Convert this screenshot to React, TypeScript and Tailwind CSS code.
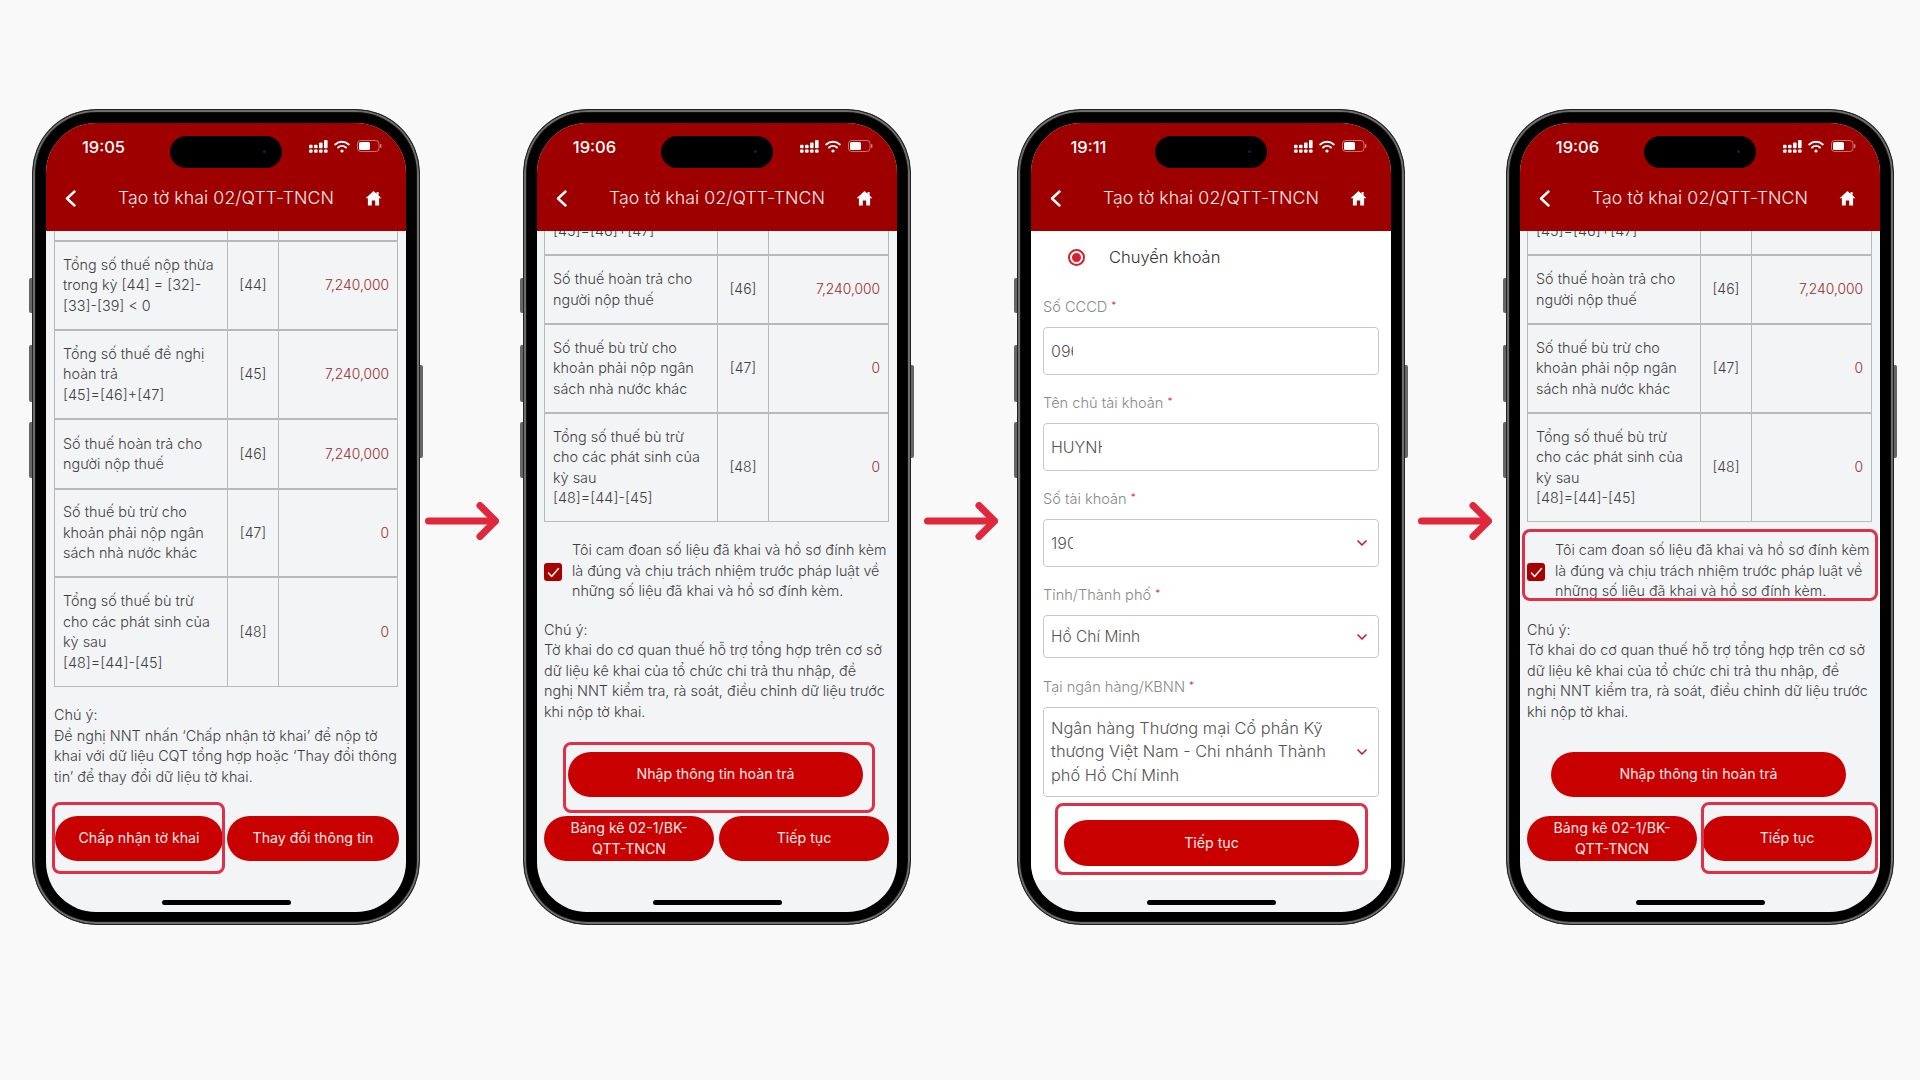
import React from "react";
import { ChevronDown } from "lucide-react";

type RowData = { h: string; label: string[]; code: string; value: string };

const font = { fontFamily: "Inter, 'Noto Sans', sans-serif" };

function StatusIcons() {
  return (
    <div className="flex items-center gap-[6px]">
      <svg width="19" height="13" viewBox="0 0 19 13" fill="white">
        <rect x="0" y="4.8" width="3.6" height="3.4" rx="1" />
        <rect x="0" y="9.4" width="3.6" height="3.4" rx="1" />
        <rect x="5" y="4.8" width="3.6" height="3.4" rx="1" />
        <rect x="5" y="9.4" width="3.6" height="3.4" rx="1" />
        <rect x="10" y="2.4" width="3.6" height="5.8" rx="1" />
        <rect x="10" y="9.4" width="3.6" height="3.4" rx="1" />
        <rect x="15" y="0" width="3.6" height="8.2" rx="1" />
        <rect x="15" y="9.4" width="3.6" height="3.4" rx="1" />
      </svg>
      <svg width="16" height="13" viewBox="0 0 16 13" fill="none" stroke="white" strokeWidth="2" strokeLinecap="round">
        <path d="M1.2 4.4a10.4 10.4 0 0 1 13.6 0" />
        <path d="M4 7.5a6.2 6.2 0 0 1 8 0" />
        <circle cx="8" cy="11" r="1.6" fill="white" stroke="none" />
      </svg>
      <svg width="25" height="12" viewBox="0 0 25 12" className="ml-[1px]">
        <rect x="0.5" y="0.5" width="21.5" height="11" rx="3.2" fill="none" stroke="white" strokeOpacity="0.45" />
        <rect x="2" y="2" width="11" height="8" rx="1.6" fill="white" />
        <rect x="23" y="4" width="1.4" height="4" rx="0.7" fill="white" fillOpacity="0.5" />
      </svg>
    </div>
  );
}

function Header({ time }: { time: string }) {
  return (
    <div className="h-[108px] bg-[#9e0000] shrink-0 text-white flex flex-col">
      <div className="h-[46px] flex items-center justify-between pr-[24px]">
        <div className="w-[115px] text-center text-[16.5px] font-medium pt-[2px]">{time}</div>
        <StatusIcons />
      </div>
      <div className="h-[58px] flex items-center pl-[19px] pr-[24px]">
        <svg width="11" height="17" viewBox="0 0 11 17" fill="none" stroke="white" strokeWidth="2.4" strokeLinecap="round" strokeLinejoin="round">
          <path d="M9.5 1.5 2 8.5l7.5 7" />
        </svg>
        <div className="flex-1 pl-[11px] text-center text-[17.7px] font-light text-[#fbeaea] tracking-[0.1px] whitespace-nowrap">Tạo tờ khai 02/QTT-TNCN</div>
        <svg width="17" height="16" viewBox="0 0 17 16" fill="white">
          <path d="M8.5 1 .6 8.2h2.3V15.5h3.9V10.6h3.4v4.9h3.9V8.2h2.3l-2.8-2.6V2h-2v1.8z" />
        </svg>
      </div>
    </div>
  );
}

function Highlight({ className }: { className: string }) {
  return <div className={`absolute border-[3px] border-[#dc3149] rounded-[8px] pointer-events-none ${className}`} />;
}

function Btn({ className, children }: { className: string; children: React.ReactNode }) {
  return (
    <div className={`bg-[#c80000] text-[#fde8e8] rounded-full flex items-center justify-center text-center text-[14.2px] leading-[20.5px] ${className}`}>
      {children}
    </div>
  );
}

function Phone({ time, children }: { time: string; children: React.ReactNode }) {
  return (
    <div className="relative w-[388px] h-[816px] shrink-0 bg-black rounded-[64px] p-[13px] border border-[#222] shadow-[inset_0_0_0_2px_#6e6e6e,inset_0_0_0_3px_#111]">
      <div className="absolute left-[-4px] top-[168px] w-[3px] h-[35px] bg-[#666] rounded-l-[2px]" />
      <div className="absolute left-[-4px] top-[235px] w-[3px] h-[57px] bg-[#666] rounded-l-[2px]" />
      <div className="absolute left-[-4px] top-[312px] w-[3px] h-[56px] bg-[#666] rounded-l-[2px]" />
      <div className="absolute right-[-4px] top-[255px] w-[3px] h-[93px] bg-[#666] rounded-r-[2px]" />
      <div className="relative w-[360px] h-[789px] rounded-[50px] overflow-hidden bg-[#f3f4f6] flex flex-col">
        <Header time={time} />
        {children}
        <div className="absolute left-[124px] top-[13px] w-[112px] h-[32px] bg-black rounded-full">
          <div className="absolute right-[16px] top-[14px] w-[3px] h-[3px] bg-[#1c1c3a] rounded-full" />
        </div>
        <div className="absolute left-[116px] top-[777px] w-[129px] h-[5px] bg-black rounded-full" />
      </div>
    </div>
  );
}

function Row({ h, label, code, value }: RowData) {
  return (
    <div className={`flex border-t-2 border-[#b9b9b9] ${h}`}>
      <div className="w-[172px] shrink-0 pl-[8px] flex flex-col justify-center">
        {label.map((l) => (
          <div key={l} className="whitespace-nowrap">{l}</div>
        ))}
      </div>
      <div className="w-[51px] shrink-0 border-l border-[#b9b9b9] flex items-center justify-center text-[14px]">{code}</div>
      <div className="flex-1 border-l border-[#b9b9b9] flex items-center justify-end pr-[8px] text-[#9a2a2a] text-[13.8px]">{value}</div>
    </div>
  );
}

function Table({ top, topText, rows, className }: { top: string; topText?: string; rows: RowData[]; className: string }) {
  return (
    <div className={`border-x border-b border-[#b9b9b9] text-[14.4px] leading-[20.5px] font-light text-[#3f3f3f] shrink-0 ${className}`}>
      <div className={`flex overflow-hidden ${top}`}>
        <div className="w-[172px] shrink-0 pl-[8px] flex items-end pb-[13px]">
          <div className="whitespace-nowrap">{topText}</div>
        </div>
        <div className="w-[51px] shrink-0 border-l border-[#b9b9b9]" />
        <div className="flex-1 border-l border-[#b9b9b9]" />
      </div>
      {rows.map((r) => (
        <Row key={r.code} {...r} />
      ))}
    </div>
  );
}

function Lines({ lines, className }: { lines: string[]; className: string }) {
  return (
    <div className={`leading-[20.5px] font-light text-[#3f3f3f] whitespace-nowrap ${className}`}>
      {lines.map((l) => (
        <div key={l}>{l}</div>
      ))}
    </div>
  );
}

const r46 = { label: ["Số thuế hoàn trả cho", "người nộp thuế"], code: "[46]", value: "7,240,000" };
const r47 = { label: ["Số thuế bù trừ cho", "khoản phải nộp ngân", "sách nhà nước khác"], code: "[47]", value: "0" };
const r48 = { label: ["Tổng số thuế bù trừ", "cho các phát sinh của", "kỳ sau", "[48]=[44]-[45]"], code: "[48]", value: "0" };

const rowsA: RowData[] = [
  { h: "h-[89px]", label: ["Tổng số thuế nộp thừa", "trong kỳ [44] = [32]-", "[33]-[39] < 0"], code: "[44]", value: "7,240,000" },
  { h: "h-[89px]", label: ["Tổng số thuế đề nghị", "hoàn trả", "[45]=[46]+[47]"], code: "[45]", value: "7,240,000" },
  { h: "h-[70px]", ...r46 },
  { h: "h-[88px]", ...r47 },
  { h: "h-[110px]", ...r48 },
];
const rowsB: RowData[] = [
  { h: "h-[69px]", ...r46 },
  { h: "h-[89px]", ...r47 },
  { h: "h-[109px]", ...r48 },
];

const consent = ["Tôi cam đoan số liệu đã khai và hồ sơ đính kèm", "là đúng và chịu trách nhiệm trước pháp luật về", "những số liệu đã khai và hồ sơ đính kèm."];
const note = ["Chú ý:", "Tờ khai do cơ quan thuế hỗ trợ tổng hợp trên cơ sở", "dữ liệu kê khai của tổ chức chi trả thu nhập, đề", "nghị NNT kiểm tra, rà soát, điều chỉnh dữ liệu trước", "khi nộp tờ khai."];

function SecondBody() {
  return (
    <>
      <Table top="h-[23px]" topText="[45]=[46]+[47]" rows={rowsB} className="ml-[7px] mr-[8px]" />
      <div className="flex items-center ml-[7px] mt-[18px]">
        <div className="w-[18px] h-[18px] rounded-[3px] bg-[#a80000] flex items-center justify-center shrink-0 mt-[3px]">
          <svg width="13" height="11" viewBox="0 0 13 11" fill="none" stroke="white" strokeWidth="1.5" strokeLinecap="round" strokeLinejoin="round">
            <path d="M1.5 6 4.6 9.5 11.5 1.5" />
          </svg>
        </div>
        <Lines lines={consent} className="ml-[10px] text-[14.3px]" />
      </div>
      <Lines lines={note} className="ml-[7px] mt-[18px] text-[14.4px]" />
      <Btn className="ml-[31px] w-[295px] h-[45px] mt-[30px]">Nhập thông tin hoàn trả</Btn>
      <div className="flex ml-[7px] gap-[5px] mt-[19px]">
        <Btn className="w-[170px] h-[45px]">
          Bảng kê 02-1/BK-
          <br />
          QTT-TNCN
        </Btn>
        <Btn className="w-[170px] h-[45px]">Tiếp tục</Btn>
      </div>
    </>
  );
}

function Field({ label, mt, children, box }: { label: string; mt: string; children: React.ReactNode; box: string }) {
  return (
    <div className={`mx-[12px] ${mt}`}>
      <div className="h-[20px] overflow-visible text-[14.6px] leading-[20px] text-[#8a8a8a] font-light">
        {label}
        <span className="text-[#c82333] text-[10px] leading-[10px] align-[3px] ml-[4px]">*</span>
      </div>
      <div className={`mt-[10px] border border-[#c9c9c9] rounded-[4px] bg-white flex items-center justify-between pl-[7px] pr-[8px] text-[#555] font-light ${box}`}>
        {children}
      </div>
    </div>
  );
}

const Chev = () => <ChevronDown size={16} strokeWidth={2.6} className="text-[#c82333] shrink-0" />;

function Form() {
  return (
    <div className="bg-white pb-[14px] flex flex-col">
      <div className="h-[52px] flex items-center pl-[37px]">
        <div className="w-[17px] h-[17px] rounded-full border-2 border-[#d8212f] flex items-center justify-center">
          <div className="w-[9px] h-[9px] rounded-full bg-[#d8212f]" />
        </div>
        <div className="ml-[24px] text-[16.5px] font-light text-[#333]">Chuyển khoản</div>
      </div>
      <Field label="Số CCCD" mt="mt-[14px]" box="h-[48px] text-[16px]">
        <div className="w-[22px] overflow-hidden whitespace-nowrap">0969</div>
      </Field>
      <Field label="Tên chủ tài khoản" mt="mt-[18px]" box="h-[48px] text-[16px]">
        <div className="w-[51px] overflow-hidden whitespace-nowrap">HUYNH</div>
      </Field>
      <Field label="Số tài khoản" mt="mt-[18px]" box="h-[48px] text-[16px]">
        <div className="w-[22px] overflow-hidden whitespace-nowrap">1903</div>
        <Chev />
      </Field>
      <Field label="Tỉnh/Thành phố" mt="mt-[18px]" box="h-[43px] text-[15.5px]">
        <div>Hồ Chí Minh</div>
        <Chev />
      </Field>
      <Field label="Tại ngân hàng/KBNN" mt="mt-[19px]" box="h-[90px] text-[16.4px]">
        <div className="leading-[23.3px] whitespace-nowrap">
          <div>Ngân hàng Thương mại Cổ phần Kỹ</div>
          <div>thương Việt Nam - Chi nhánh Thành</div>
          <div>phố Hồ Chí Minh</div>
        </div>
        <Chev />
      </Field>
      <Btn className="ml-[33px] w-[295px] h-[46px] mt-[23px]">Tiếp tục</Btn>
    </div>
  );
}

function Arrow({ className }: { className: string }) {
  return (
    <div className={`shrink-0 h-[816px] flex items-center pt-[8px] ${className}`}>
      <svg width="74" height="38" viewBox="0 0 74 38" fill="none" stroke="#e0283c" strokeWidth="7" strokeLinecap="round" strokeLinejoin="round">
        <path d="M3.5 19H70" />
        <path d="M55 3.5 70.5 19 55 34.5" />
      </svg>
    </div>
  );
}

export default function App() {
  return (
    <div className="w-[1920px] h-[1080px] bg-[#f9f9f9] flex items-start pl-[32px] pt-[109px] overflow-hidden" style={font}>
      <Phone time="19:05">
        <Table top="h-[9px]" rows={rowsA} className="ml-[8px] mr-[8px]" />
        <Lines
          lines={["Chú ý:", "Đề nghị NNT nhấn ‘Chấp nhận tờ khai’ để nộp tờ", "khai với dữ liệu CQT tổng hợp hoặc ‘Thay đổi thông", "tin’ để thay đổi dữ liệu tờ khai."]}
          className="ml-[8px] mt-[18px] text-[14.4px]"
        />
        <div className="flex ml-[9px] gap-[4px] mt-[29px]">
          <Btn className="w-[168px] h-[45px]">Chấp nhận tờ khai</Btn>
          <Btn className="w-[172px] h-[45px]">Thay đổi thông tin</Btn>
        </div>
        <Highlight className="left-[6px] top-[679px] w-[173px] h-[72px]" />
      </Phone>
      <Arrow className="w-[103px] pl-[5px]" />
      <Phone time="19:06">
        <SecondBody />
        <Highlight className="left-[26px] top-[619px] w-[312px] h-[71px]" />
      </Phone>
      <Arrow className="w-[106px] pl-[13px]" />
      <Phone time="19:11">
        <Form />
        <Highlight className="left-[24px] top-[680px] w-[313px] h-[72px]" />
      </Phone>
      <Arrow className="w-[101px] pl-[13px]" />
      <Phone time="19:06">
        <SecondBody />
        <Highlight className="left-[2px] top-[406px] w-[356px] h-[72px]" />
        <Highlight className="left-[181px] top-[679px] w-[177px] h-[72px]" />
      </Phone>
    </div>
  );
}
